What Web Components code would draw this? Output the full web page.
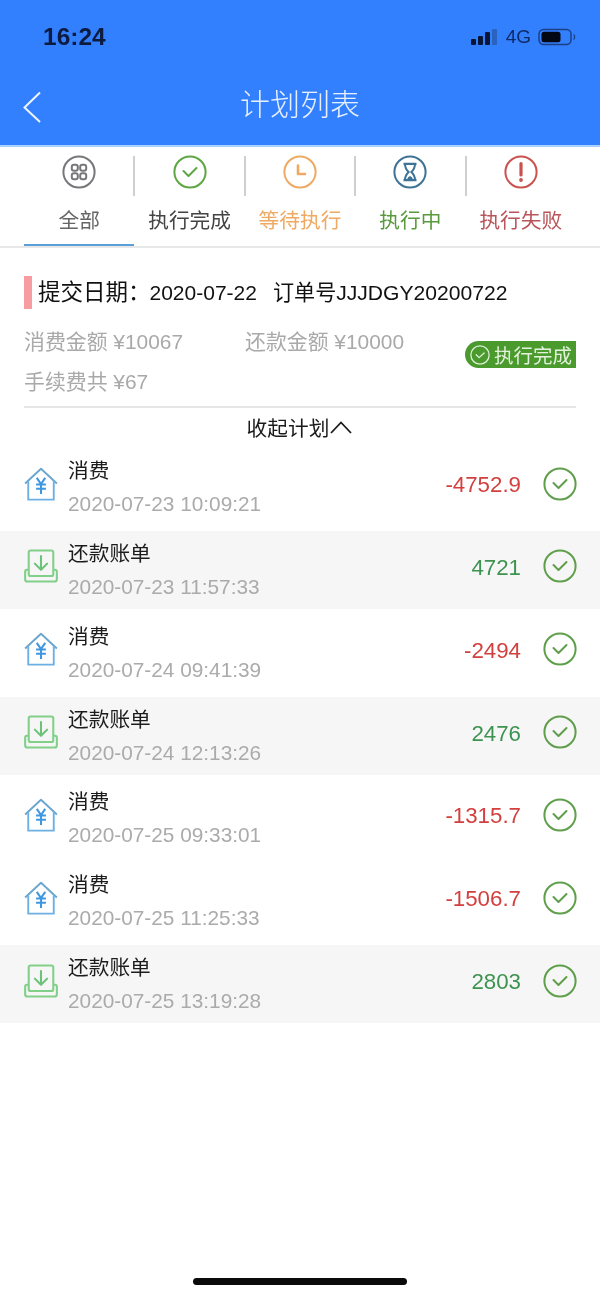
<!DOCTYPE html>
<html lang="zh">
<head>
<meta charset="utf-8">
<title>计划列表</title>
<style>
  html, body { margin: 0; padding: 0; background: #fff; }
  body { font-family: "Liberation Sans", "Noto Sans CJK SC", sans-serif; }
  plan-page { width: 600px; height: 1299px; }
</style>
</head>
<body>
<plan-page></plan-page>
<script>
const ICONS = {
  all: `<svg viewBox="0 0 34 34" fill="none" stroke="#77767a" stroke-width="2"><circle cx="17" cy="17" r="15.6"/><rect x="9.800" y="9.800" width="6" height="6" rx="2.200"/><rect x="18.200" y="9.800" width="6" height="6" rx="2.200"/><rect x="9.800" y="18.200" width="6" height="6" rx="2.200"/><rect x="18.200" y="18.200" width="6" height="6" rx="2.200"/></svg>`,
  done: `<svg viewBox="0 0 34 34" fill="none" stroke="#5da643" stroke-width="2"><circle cx="17" cy="17" r="15.6"/><path d="M10.500 16l5 5 8-8" stroke-width="2" stroke-linecap="round" stroke-linejoin="round"/></svg>`,
  wait: `<svg viewBox="0 0 34 34" fill="none" stroke="#eeaa62" stroke-width="2"><circle cx="17" cy="17" r="15.6"/><path d="M15 10.500v8.500h7" stroke-width="2.600" stroke-linecap="round" stroke-linejoin="round"/></svg>`,
  running: `<svg viewBox="0 0 34 34" fill="none" stroke="#3c7396" stroke-width="2"><circle cx="17" cy="17" r="15.6"/><path d="M10.500 8.800h13M10.500 25.200h13" stroke-width="2.200"/><path d="M12 9c0 4 1 5.500 3.600 8-2.600 2.500-3.600 4-3.600 8M22 9c0 4-1 5.500-3.600 8 2.600 2.500 3.600 4 3.600 8"/><path d="M14 24.500c.8-2 2-3 3-3.400 1 .4 2.200 1.400 3 3.400z" fill="#3c7396" stroke="none"/></svg>`,
  fail: `<svg viewBox="0 0 34 34" fill="none" stroke="#c9524f" stroke-width="2"><circle cx="17" cy="17" r="15.6"/><path d="M17 8.500v11.500" stroke-width="3.200" stroke-linecap="round"/><circle cx="17" cy="25" r="1.900" fill="#c9524f" stroke="none"/></svg>`,
  pay: `<svg viewBox="0 0 36 36" fill="none" stroke="#6db0e4" stroke-width="2"><path d="M1.200 17.500L18 1.800l16.800 15.700" stroke="#6aa6cf" stroke-linejoin="round"/><path d="M4.500 15v19.500h27V15"/><path d="M13.500 11.500l4.500 6.500 4.500-6.500M12.800 18.500h10.400M12.800 23h10.400M18 18v10.500" stroke="#3f97e0" stroke-width="2.200"/></svg>`,
  repay: `<svg viewBox="0 0 36 36" fill="none" stroke="#82cf8a" stroke-width="2.200"><rect x="5" y="1.500" width="26" height="27" rx="2"/><path d="M5 22H3.200C2 22 1.200 23 1.200 24v8c0 1.500 1 2.500 2.500 2.500h28.600c1.500 0 2.500-1 2.500-2.500v-8c0-1-.8-2-2-2H31M5 28.500h26" /><path d="M18 7.500v14M11.500 15.500l6.500 6.500 6.500-6.500" stroke="#6cc278" stroke-linecap="round" stroke-linejoin="round"/></svg>`
};

class StatusBar extends HTMLElement {
  constructor() {
    super();
    this.attachShadow({ mode: 'open' });
  }
  connectedCallback() {
    this.shadowRoot.innerHTML = `
      <style>
        :host { display: flex; align-items: center; height: 73px; padding: 0 24px 0 43px; color: #0d1b3f; }
        .time { font-size: 24.500px; font-weight: 700; flex: 1; }
        .sig { display: flex; align-items: flex-end; gap: 2px; height: 16px; margin-right: 9px; }
        .sig i { width: 5px; background: #0a1636; border-radius: 1px; }
        .net { font-size: 19px; margin-right: 7px; color: #0f2a66; }
        svg { display: block; width: 38px; height: 18px; }
      </style>
      <span class="time">16:24</span>
      <span class="sig"><i style="height:6px"></i><i style="height:9px"></i><i style="height:13px"></i><i style="height:16px;background:#2a63bd"></i></span>
      <span class="net">4G</span>
      <svg viewBox="0 0 38 18"><rect x="1" y="1.500" width="32" height="15" rx="4.500" fill="none" stroke="#1c3f84" stroke-width="1.500"/><rect x="3.500" y="3.800" width="19" height="10.400" rx="2.500" fill="#030713"/><path d="M35.500 6.500c1.500.5 1.500 4.500 0 5" fill="none" stroke="#1c3f84" stroke-width="1.300"/></svg>`;
  }
}

class AppHeader extends HTMLElement {
  constructor() {
    super();
    this.attachShadow({ mode: 'open' });
  }
  connectedCallback() {
    this.shadowRoot.innerHTML = `
      <style>
        :host { display: block; background: #3380ff; border-bottom: 2px solid #a9d0ff; box-sizing: border-box; height: 147px; }
        .bar { display: grid; grid-template-columns: 80px 1fr 80px; align-items: center; height: 68px; }
        svg { width: 20px; height: 32px; margin-left: 22px; display: block; }
        h1 { margin: 0 0 4px; text-align: center; color: #e6f0ff; font-size: 30px; font-weight: 300; line-height: 40px; }
      </style>
      <status-bar></status-bar>
      <div class="bar">
        <svg viewBox="0 0 20 32" fill="none" stroke="#eef5ff" stroke-width="2"><path d="M18 1.500L2.500 16.500 18 31"/></svg>
        <h1><slot></slot></h1>
        <span></span>
      </div>`;
  }
}

class TabItem extends HTMLElement {
  constructor() {
    super();
    this.attachShadow({ mode: 'open' });
  }
  connectedCallback() {
    const color = this.getAttribute('color');
    this.shadowRoot.innerHTML = `
      <style>
        :host { display: flex; flex-direction: column; align-items: center; width: 110.4px; box-sizing: border-box; height: 99px; position: relative; }
        :host([active]) { border-bottom: 2px solid #5c9fd8; }
        :host([sep])::after { content: ""; position: absolute; right: -1px; top: 9px; height: 40px; width: 2px; background: #cfcfcf; }
        .ic { width: 34px; height: 34px; margin-top: 8px; }
        .ic svg { display: block; width: 34px; height: 34px; }
        .lb { margin-top: 17px; font-size: 20.700px; line-height: 30px; color: ${color}; white-space: nowrap; }
      </style>
      <span class="ic">${ICONS[this.getAttribute('icon')]}</span>
      <span class="lb"><slot></slot></span>`;
  }
}

class PlanTabs extends HTMLElement {
  constructor() {
    super();
    this.attachShadow({ mode: 'open' });
  }
  connectedCallback() {
    this.shadowRoot.innerHTML = `
      <style>
        :host { display: flex; height: 99px; padding: 0 24px; border-bottom: 2px solid #e8e8e8; }
      </style>
      <slot></slot>`;
  }
}

class PlanSummary extends HTMLElement {
  constructor() {
    super();
    this.attachShadow({ mode: 'open' });
  }
  connectedCallback() {
    this.shadowRoot.innerHTML = `
      <style>
        :host { display: block; padding: 28px 24px 0; }
        .head { display: flex; height: 33px; color: #111; white-space: nowrap; }
        .mark { width: 8px; height: 33px; background: #f79da2; margin-right: 6px; }
        .line { display: block; font-size: 21px; line-height: 33px; }
        .lbl { font-size: 22.500px; }
        .date { margin-left: -1px; }
        .ord { margin-left: 16px; font-size: 21.100px; }
        .body { display: grid; grid-template-columns: 221px 1fr auto; grid-auto-rows: 40px; margin-top: 11px; height: 80px; color: #a9a9a9; font-size: 20.900px; align-items: center; border-bottom: 2px solid #e6e6e6; padding-bottom: 6px; }
        .badge { grid-column: 3; grid-row: 1; align-self: end; display: flex; align-items: center; gap: 4px; height: 27px; width: 111px; box-sizing: border-box; padding-left: 5px; margin-bottom: -8px; background: #4b9a2e; color: #e3f2dc; border-radius: 14px 0 0 14px; font-size: 19.500px; white-space: nowrap; }
        .badge svg { width: 20px; height: 20px; display: block; }
        .toggle { display: flex; justify-content: center; align-items: center; height: 40px; padding-bottom: 3px; box-sizing: border-box; font-size: 20.700px; color: #1a1a1a; }
        .toggle svg { width: 24px; height: 14px; display: block; }
      </style>
      <div class="head"><span class="mark"></span><span class="line"><span class="lbl">提交日期：</span><span class="date">2020-07-22</span><span class="ord">订单号JJJDGY20200722</span></span></div>
      <div class="body">
        <span>消费金额 ¥10067</span>
        <span>还款金额 ¥10000</span>
        <span class="badge"><svg viewBox="0 0 34 34" fill="none" stroke="#dff0d6" stroke-width="2.200"><circle cx="17" cy="17" r="15.500"/><path d="M10.500 16.500l5 5 8.500-8" stroke-linecap="round" stroke-linejoin="round"/></svg>执行完成</span>
        <span style="grid-column:1/3">手续费共 ¥67</span>
      </div>
      <div class="toggle">收起计划<svg viewBox="0 0 24 14" fill="none" stroke="#1a1a1a" stroke-width="1.800"><path d="M2 13L12 2.500 22 13"/></svg></div>`;
  }
}

class PlanRow extends HTMLElement {
  constructor() {
    super();
    this.attachShadow({ mode: 'open' });
  }
  connectedCallback() {
    const type = this.getAttribute('type');
    const pay = type === 'pay';
    this.shadowRoot.innerHTML = `
      <style>
        :host { display: flex; align-items: center; height: 78px; padding: 0 24px; box-sizing: border-box; background: ${pay ? '#fff' : '#f6f6f6'}; }
        .ic { width: 34px; height: 34px; flex: none; margin: 0 10px 7px 0; }
        .ic svg { display: block; width: 34px; height: 34px; }
        .txt { flex: 1; }
        .t { font-size: 20.700px; line-height: 33px; color: #1c1c1c; }
        .d { font-size: 20.800px; line-height: 33px; color: #ababab; white-space: nowrap; }
        .amt { font-size: 22.300px; color: ${pay ? '#d2403f' : '#3d9350'}; margin: 0 22px 4px 0; }
        .ok { width: 34px; height: 34px; flex: none; margin: 0 -1px 7px 0; }
        .ok svg { display: block; width: 34px; height: 34px; }
      </style>
      <span class="ic">${ICONS[type]}</span>
      <div class="txt"><div class="t">${pay ? '消费' : '还款账单'}</div><div class="d">${this.getAttribute('time')}</div></div>
      <span class="amt">${this.getAttribute('amount')}</span>
      <span class="ok">${ICONS.done.replace('#5da643', '#5f9e4a')}</span>`;
  }
}

class PlanPage extends HTMLElement {
  constructor() {
    super();
    this.attachShadow({ mode: 'open' });
  }
  connectedCallback() {
    const rows = [
      ['pay', '2020-07-23 10:09:21', '-4752.9'],
      ['repay', '2020-07-23 11:57:33', '4721'],
      ['pay', '2020-07-24 09:41:39', '-2494'],
      ['repay', '2020-07-24 12:13:26', '2476'],
      ['pay', '2020-07-25 09:33:01', '-1315.7'],
      ['pay', '2020-07-25 11:25:33', '-1506.7'],
      ['repay', '2020-07-25 13:19:28', '2803']
    ];
    this.shadowRoot.innerHTML = `
      <style>
        :host { display: flex; flex-direction: column; background: #fff; overflow: hidden; font-family: "Liberation Sans", "Noto Sans CJK SC", sans-serif; filter: blur(0.4px); }
        .list { display: flex; flex-direction: column; gap: 4.850px; flex: 1; }
        .home { height: 21px; display: flex; justify-content: center; }
        .home i { width: 214px; height: 7px; border-radius: 4px; background: #0a0a0a; }
      </style>
      <app-header>计划列表</app-header>
      <plan-tabs>
        <tab-item icon="all" color="#666" sep active>全部</tab-item>
        <tab-item icon="done" color="#444" sep>执行完成</tab-item>
        <tab-item icon="wait" color="#eeaa62" sep>等待执行</tab-item>
        <tab-item icon="running" color="#5a9a3e" sep>执行中</tab-item>
        <tab-item icon="fail" color="#b9545a">执行失败</tab-item>
      </plan-tabs>
      <plan-summary></plan-summary>
      <div class="list">
        ${rows.map(r => `<plan-row type="${r[0]}" time="${r[1]}" amount="${r[2]}"></plan-row>`).join('')}
      </div>
      <div class="home"><i></i></div>`;
  }
}

customElements.define('status-bar', StatusBar);
customElements.define('app-header', AppHeader);
customElements.define('tab-item', TabItem);
customElements.define('plan-tabs', PlanTabs);
customElements.define('plan-summary', PlanSummary);
customElements.define('plan-row', PlanRow);
customElements.define('plan-page', PlanPage);
</script>
</body>
</html>
